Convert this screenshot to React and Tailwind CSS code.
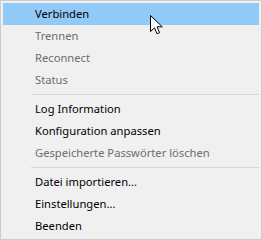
const groups = [
  [
    { label: 'Verbinden', active: true },
    { label: 'Trennen', disabled: true },
    { label: 'Reconnect', disabled: true },
    { label: 'Status', disabled: true },
  ],
  [
    { label: 'Log Information' },
    { label: 'Konfiguration anpassen' },
    { label: 'Gespeicherte Passwörter löschen', disabled: true },
  ],
  [
    { label: 'Datei importieren...' },
    { label: 'Einstellungen...' },
    { label: 'Beenden' },
  ],
]

function Cursor() {
  return (
    <svg className="absolute left-[149px] top-[14px]" width="13" height="20" viewBox="0 0 13 20">
      <path
        d="M0.5 0.5 L0.5 16.5 L4.5 12.8 L7 18.8 L9.6 17.7 L7.1 11.8 L12.3 11.8 Z"
        fill="#ffffff"
        stroke="#000000"
        strokeWidth="1"
        strokeLinejoin="miter"
      />
    </svg>
  )
}

export default function App() {
  return (
    <div className="relative w-[262px] h-[240px] bg-[#f0f0f0] border border-[#cccccc] p-[2px] font-['Noto_Sans',sans-serif] text-[11.2px]">
      {groups.map((items, gi) => (
        <div key={gi}>
          {gi > 0 && (
            <div className="h-[7px] flex items-center pl-[28px]">
              <div className="h-px w-full bg-[#d7d7d7]" />
            </div>
          )}
          {items.map(item => (
            <div
              key={item.label}
              className={`h-[22px] flex items-center pl-[32px] ${
                item.active ? 'bg-[#91c9f7]' : ''
              } ${item.disabled ? 'text-[#6d6d6d]' : 'text-black'}`}
            >
              {item.label}
            </div>
          ))}
        </div>
      ))}
      <Cursor />
    </div>
  )
}
